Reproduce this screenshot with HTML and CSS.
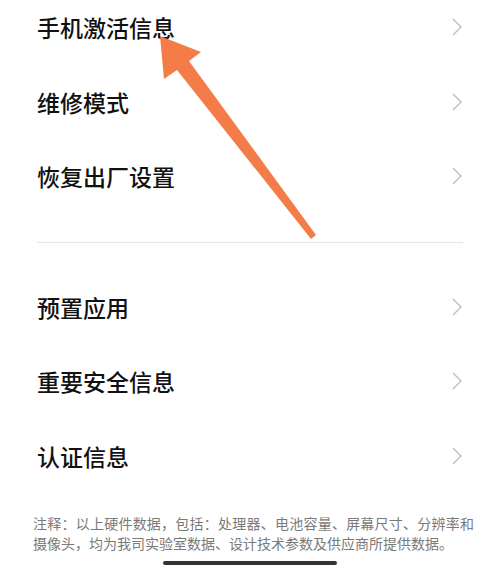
FILE: index.html
```html
<!DOCTYPE html>
<html lang="zh-CN">

<head>
    <meta charset="UTF-8">
    <meta name="viewport" content="width=device-width, initial-scale=1.0">
    <title>关于手机</title>
    <link rel="stylesheet" href="styles.css">
</head>

<body>

    <div class="lista primeira">
        <div class="item"><span>手机激活信息</span><svg class="seta" viewBox="0 0 10 18"><path d="M1 1 L9 9 L1 17"/></svg></div>
        <div class="item"><span>维修模式</span><svg class="seta" viewBox="0 0 10 18"><path d="M1 1 L9 9 L1 17"/></svg></div>
        <div class="item"><span>恢复出厂设置</span><svg class="seta" viewBox="0 0 10 18"><path d="M1 1 L9 9 L1 17"/></svg></div>
    </div>

    <div class="divisor"></div>

    <div class="lista">
        <div class="item"><span>预置应用</span><svg class="seta" viewBox="0 0 10 18"><path d="M1 1 L9 9 L1 17"/></svg></div>
        <div class="item"><span>重要安全信息</span><svg class="seta" viewBox="0 0 10 18"><path d="M1 1 L9 9 L1 17"/></svg></div>
        <div class="item"><span>认证信息</span><svg class="seta" viewBox="0 0 10 18"><path d="M1 1 L9 9 L1 17"/></svg></div>
    </div>

    <p class="nota">注释：以上硬件数据，包括：处理器、电池容量、屏幕尺寸、分辨率和摄像头，均为我司实验室数据、设计技术参数及供应商所提供数据。</p>

    <div class="home"></div>

    <!-- seta laranja desenhada por cima da lista -->
    <svg class="flecha" width="500" height="568" viewBox="0 0 500 568">
        <polygon points="160,36 201,52 189,61 316,235 311,239 177,70 164,79" fill="#f47c48"/>
    </svg>

</body>

</html>
```

FILE: styles.css
```css
body {
    margin: 0;
    width: 500px;
    height: 568px;
    overflow: hidden;
    position: relative;
    background-color: #fff;
    font-family: "Noto Sans CJK SC", "Noto Sans", sans-serif;
}

.lista {
    padding: 0 37px;
}

.primeira {
    margin-top: -10px;
}

.item {
    height: 74.5px;
    display: flex;
    align-items: center;
    justify-content: space-between;
    font-size: 23px;
    font-weight: 500;
    color: #111;
}

.seta {
    width: 10px;
    height: 18px;
    margin-right: 1px;
}

.seta path {
    fill: none;
    stroke: #bdbdbd;
    stroke-width: 1.4;
}

.divisor {
    height: 1px;
    margin: 28px 37px 27px;
    background-color: #e6e6e6;
}

.nota {
    margin: 20px 26px 0 33px;
    font-size: 14px;
    line-height: 20px;
    color: #7a7a7a;
    text-align: justify;
}

.home {
    position: absolute;
    left: 163px;
    top: 561px;
    width: 174px;
    height: 4px;
    border-radius: 2px;
    background-color: #333;
}

.flecha {
    position: absolute;
    left: 0;
    top: 0;
}
```
